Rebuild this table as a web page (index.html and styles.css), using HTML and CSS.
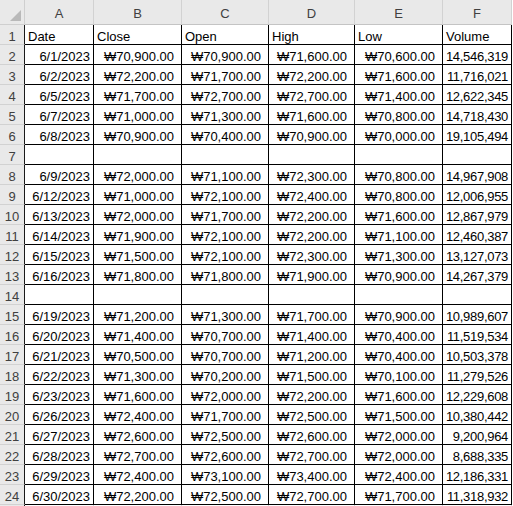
FILE: index.html
```html
<!DOCTYPE html>
<html>
<head>
<meta charset="utf-8">
<link rel="stylesheet" href="styles.css">
</head>
<body>
<table class="sheet">
<colgroup>
<col class="c-rh"><col class="c-a"><col class="c-b"><col class="c-c"><col class="c-d"><col class="c-e"><col class="c-f">
</colgroup>
<thead>
<tr class="hrow">
<th class="corner"><svg class="tri" width="11" height="11" viewBox="0 0 11 11"><polygon points="11,0 11,11 0,11" fill="#b9b9b9"/></svg></th>
<th class="colhead">A</th><th class="colhead">B</th><th class="colhead">C</th><th class="colhead">D</th><th class="colhead">E</th><th class="colhead">F</th>
</tr>
</thead>
<tbody>
<tr><th class="rowhead">1</th><td class="cell txt">Date</td><td class="cell txt">Close</td><td class="cell txt">Open</td><td class="cell txt">High</td><td class="cell txt">Low</td><td class="cell txt">Volume</td></tr>
<tr><th class="rowhead">2</th><td class="cell num">6/1/2023</td><td class="cell cur">₩70,900.00</td><td class="cell cur">₩70,900.00</td><td class="cell cur">₩71,600.00</td><td class="cell cur">₩70,600.00</td><td class="cell num vol">14,546,319</td></tr>
<tr><th class="rowhead">3</th><td class="cell num">6/2/2023</td><td class="cell cur">₩72,200.00</td><td class="cell cur">₩71,700.00</td><td class="cell cur">₩72,200.00</td><td class="cell cur">₩71,600.00</td><td class="cell num vol">11,716,021</td></tr>
<tr><th class="rowhead">4</th><td class="cell num">6/5/2023</td><td class="cell cur">₩71,700.00</td><td class="cell cur">₩72,700.00</td><td class="cell cur">₩72,700.00</td><td class="cell cur">₩71,400.00</td><td class="cell num vol">12,622,345</td></tr>
<tr><th class="rowhead">5</th><td class="cell num">6/7/2023</td><td class="cell cur">₩71,000.00</td><td class="cell cur">₩71,300.00</td><td class="cell cur">₩71,600.00</td><td class="cell cur">₩70,800.00</td><td class="cell num vol">14,718,430</td></tr>
<tr><th class="rowhead">6</th><td class="cell num">6/8/2023</td><td class="cell cur">₩70,900.00</td><td class="cell cur">₩70,400.00</td><td class="cell cur">₩70,900.00</td><td class="cell cur">₩70,000.00</td><td class="cell num vol">19,105,494</td></tr>
<tr><th class="rowhead">7</th><td class="cell"></td><td class="cell"></td><td class="cell"></td><td class="cell"></td><td class="cell"></td><td class="cell"></td></tr>
<tr><th class="rowhead">8</th><td class="cell num">6/9/2023</td><td class="cell cur">₩72,000.00</td><td class="cell cur">₩71,100.00</td><td class="cell cur">₩72,300.00</td><td class="cell cur">₩70,800.00</td><td class="cell num vol">14,967,908</td></tr>
<tr><th class="rowhead">9</th><td class="cell num">6/12/2023</td><td class="cell cur">₩71,000.00</td><td class="cell cur">₩72,100.00</td><td class="cell cur">₩72,400.00</td><td class="cell cur">₩70,800.00</td><td class="cell num vol">12,006,955</td></tr>
<tr><th class="rowhead">10</th><td class="cell num">6/13/2023</td><td class="cell cur">₩72,000.00</td><td class="cell cur">₩71,700.00</td><td class="cell cur">₩72,200.00</td><td class="cell cur">₩71,600.00</td><td class="cell num vol">12,867,979</td></tr>
<tr><th class="rowhead">11</th><td class="cell num">6/14/2023</td><td class="cell cur">₩71,900.00</td><td class="cell cur">₩72,100.00</td><td class="cell cur">₩72,200.00</td><td class="cell cur">₩71,100.00</td><td class="cell num vol">12,460,387</td></tr>
<tr><th class="rowhead">12</th><td class="cell num">6/15/2023</td><td class="cell cur">₩71,500.00</td><td class="cell cur">₩72,100.00</td><td class="cell cur">₩72,300.00</td><td class="cell cur">₩71,300.00</td><td class="cell num vol">13,127,073</td></tr>
<tr><th class="rowhead">13</th><td class="cell num">6/16/2023</td><td class="cell cur">₩71,800.00</td><td class="cell cur">₩71,800.00</td><td class="cell cur">₩71,900.00</td><td class="cell cur">₩70,900.00</td><td class="cell num vol">14,267,379</td></tr>
<tr><th class="rowhead">14</th><td class="cell"></td><td class="cell"></td><td class="cell"></td><td class="cell"></td><td class="cell"></td><td class="cell"></td></tr>
<tr><th class="rowhead">15</th><td class="cell num">6/19/2023</td><td class="cell cur">₩71,200.00</td><td class="cell cur">₩71,300.00</td><td class="cell cur">₩71,700.00</td><td class="cell cur">₩70,900.00</td><td class="cell num vol">10,989,607</td></tr>
<tr><th class="rowhead">16</th><td class="cell num">6/20/2023</td><td class="cell cur">₩71,400.00</td><td class="cell cur">₩70,700.00</td><td class="cell cur">₩71,400.00</td><td class="cell cur">₩70,400.00</td><td class="cell num vol">11,519,534</td></tr>
<tr><th class="rowhead">17</th><td class="cell num">6/21/2023</td><td class="cell cur">₩70,500.00</td><td class="cell cur">₩70,700.00</td><td class="cell cur">₩71,200.00</td><td class="cell cur">₩70,400.00</td><td class="cell num vol">10,503,378</td></tr>
<tr><th class="rowhead">18</th><td class="cell num">6/22/2023</td><td class="cell cur">₩71,300.00</td><td class="cell cur">₩70,200.00</td><td class="cell cur">₩71,500.00</td><td class="cell cur">₩70,100.00</td><td class="cell num vol">11,279,526</td></tr>
<tr><th class="rowhead">19</th><td class="cell num">6/23/2023</td><td class="cell cur">₩71,600.00</td><td class="cell cur">₩72,000.00</td><td class="cell cur">₩72,200.00</td><td class="cell cur">₩71,600.00</td><td class="cell num vol">12,229,608</td></tr>
<tr><th class="rowhead">20</th><td class="cell num">6/26/2023</td><td class="cell cur">₩72,400.00</td><td class="cell cur">₩71,700.00</td><td class="cell cur">₩72,500.00</td><td class="cell cur">₩71,500.00</td><td class="cell num vol">10,380,442</td></tr>
<tr><th class="rowhead">21</th><td class="cell num">6/27/2023</td><td class="cell cur">₩72,600.00</td><td class="cell cur">₩72,500.00</td><td class="cell cur">₩72,600.00</td><td class="cell cur">₩72,000.00</td><td class="cell num vol">9,200,964</td></tr>
<tr><th class="rowhead">22</th><td class="cell num">6/28/2023</td><td class="cell cur">₩72,700.00</td><td class="cell cur">₩72,600.00</td><td class="cell cur">₩72,700.00</td><td class="cell cur">₩72,000.00</td><td class="cell num vol">8,688,335</td></tr>
<tr><th class="rowhead">23</th><td class="cell num">6/29/2023</td><td class="cell cur">₩72,400.00</td><td class="cell cur">₩73,100.00</td><td class="cell cur">₩73,400.00</td><td class="cell cur">₩72,400.00</td><td class="cell num vol">12,186,331</td></tr>
<tr><th class="rowhead">24</th><td class="cell num">6/30/2023</td><td class="cell cur">₩72,200.00</td><td class="cell cur">₩72,500.00</td><td class="cell cur">₩72,700.00</td><td class="cell cur">₩71,700.00</td><td class="cell num vol">11,318,932</td></tr>
<tr class="tail"><th class="rowhead"></th><td class="grid"></td><td class="grid"></td><td class="grid"></td><td class="grid"></td><td class="grid"></td><td class="grid"></td></tr>
</tbody>
</table>
</body>
</html>
```

FILE: styles.css
```css
html, body {
  margin: 0;
  padding: 0;
  background: #ffffff;
  overflow: hidden;
}

.sheet {
  table-layout: fixed;
  border-collapse: separate;
  border-spacing: 0;
  width: 512px;
  font-family: "Liberation Sans", "Noto Sans CJK KR", sans-serif;
  font-size: 13px;
  line-height: 15px;
  color: #000000;
}

.c-rh { width: 25px; }
.c-a { width: 69px; }
.c-b { width: 88px; }
.c-c { width: 87px; }
.c-d { width: 86px; }
.c-e { width: 88px; }
.c-f { width: 69px; }

.sheet th,
.sheet td {
  padding: 0;
  vertical-align: bottom;
  white-space: nowrap;
  overflow: hidden;
  font-weight: normal;
}

.hrow { height: 25px; }
.sheet tbody tr { height: 20px; }
.sheet tbody tr.tail { height: 8px; }

.corner {
  background: #e9e9e9;
  border-right: 1px solid #cfcfcf;
  border-bottom: 1px solid #cfcfcf;
}

.tri {
  display: block;
  margin: 0 3px 3px auto;
}

.colhead {
  background: #e9e9e9;
  color: #404040;
  text-align: center;
  border-right: 1px solid #d2d2d2;
  border-bottom: 1px solid #c4c4c4;
  padding-bottom: 3px !important;
}

.rowhead {
  background: #e9e9e9;
  color: #404040;
  text-align: center;
  border-right: 1px solid #1a1a1a;
  border-bottom: 1px solid #d2d2d2;
}

.cell {
  border-right: 1px solid #000000;
  border-bottom: 1px solid #000000;
}

.txt {
  text-align: left;
  padding-left: 3px !important;
}

.num {
  text-align: right;
  padding-right: 3px !important;
}

.vol {
  letter-spacing: -0.3px;
}

.cur {
  text-align: right;
  padding-right: 7px !important;
}

.grid {
  border-right: 1px solid #d9d9d9;
}
```
